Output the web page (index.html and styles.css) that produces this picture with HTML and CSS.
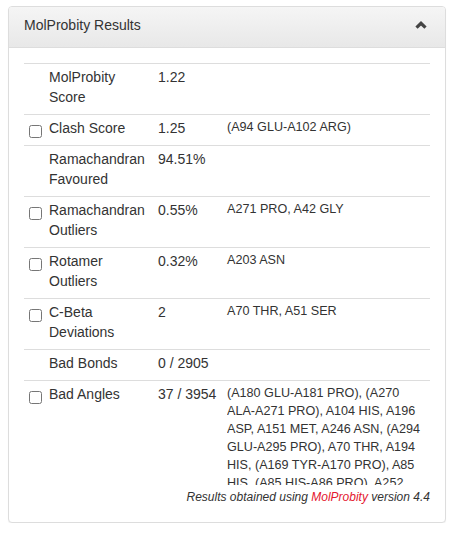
FILE: index.html
```html
<!DOCTYPE html>
<html>
<head>
<meta charset="utf-8">
<link rel="stylesheet" href="styles.css">
</head>
<body>
<div class="panel">
  <div class="panel-heading">
    <h3 class="panel-title">MolProbity Results</h3>
    <svg class="chevron" width="12" height="8" viewBox="0 0 12 8"><polyline points="1.5,6.7 6,2.3 10.5,6.7" fill="none" stroke="#444" stroke-width="3.2"/></svg>
  </div>
  <div class="panel-body">
    <table class="results">
      <colgroup><col class="c1"><col class="c2"><col class="c3"><col class="c4"></colgroup>
      <tbody>
        <tr><td></td><td>MolProbity Score</td><td class="val">1.22</td><td></td></tr>
        <tr><td><input type="checkbox" class="cb"></td><td>Clash Score</td><td class="val">1.25</td><td class="det">(A94 GLU-A102 ARG)</td></tr>
        <tr><td></td><td>Ramachandran Favoured</td><td class="val">94.51%</td><td></td></tr>
        <tr><td><input type="checkbox" class="cb"></td><td>Ramachandran Outliers</td><td class="val">0.55%</td><td class="det">A271 PRO, A42 GLY</td></tr>
        <tr><td><input type="checkbox" class="cb"></td><td>Rotamer Outliers</td><td class="val">0.32%</td><td class="det">A203 ASN</td></tr>
        <tr><td><input type="checkbox" class="cb"></td><td>C-Beta Deviations</td><td class="val">2</td><td class="det">A70 THR, A51 SER</td></tr>
        <tr><td></td><td>Bad Bonds</td><td class="val">0 / 2905</td><td></td></tr>
        <tr class="last"><td><input type="checkbox" class="cb"></td><td>Bad Angles</td><td class="val">37 / 3954</td><td class="det"><div class="scroll">(A180 GLU-A181 PRO), (A270 ALA-A271 PRO), A104 HIS, A196 ASP, A151 MET, A246 ASN, (A294 GLU-A295 PRO), A70 THR, A194 HIS, (A169 TYR-A170 PRO), A85 HIS, (A85 HIS-A86 PRO), A252 GLU, A271 PRO, (A42 GLY-A43 PRO), A203 ASN, A51 SER</div></td></tr>
      </tbody>
    </table>
    <p class="credit">Results obtained using <a class="link">MolProbity</a> version 4.4</p>
  </div>
</div>
</body>
</html>
```
FILE: styles.css
```css
html, body {
  margin: 0;
  padding: 0;
  background: #fff;
}
body {
  font-family: "Liberation Sans", Arial, sans-serif;
  font-size: 14px;
  line-height: 20px;
  color: #333;
}
.panel {
  box-sizing: border-box;
  width: 438px;
  margin: 6px 0 0 8px;
  border: 1px solid #ddd;
  border-radius: 4px;
  box-shadow: 0 1px 1px rgba(0,0,0,0.05);
  background: #fff;
}
.panel-heading {
  display: flex;
  justify-content: space-between;
  align-items: center;
  padding: 8px 15px 12px;
  background: linear-gradient(to bottom, #f5f5f5 0%, #e8e8e8 100%);
  border-bottom: 1px solid #ddd;
  border-radius: 3px 3px 0 0;
}
.panel-title {
  margin: 0;
  font-size: 14px;
  font-weight: normal;
  line-height: 20px;
  color: #333;
}
.chevron {
  display: block;
  margin: 0 3px 0 0;
}
.panel-body {
  padding: 15px 15px 16px;
}
.results {
  width: 100%;
  table-layout: fixed;
  border-collapse: collapse;
  border-spacing: 0;
}
.c1 { width: 20px; }
.c2 { width: 109px; }
.c3 { width: 69px; }
.c4 { width: auto; }
.results td {
  padding: 3px 5px 7px;
  vertical-align: top;
  border-top: 1px solid #ddd;
}
.results .last td {
  padding-bottom: 3px;
}
.val { white-space: nowrap; }
.det {
  font-size: 12.6px;
  line-height: 18px;
}
.scroll {
  max-height: 101px;
  overflow: hidden;
}
.cb {
  display: block;
  width: 13px;
  height: 13px;
  margin: 7px 0 0 0;
}
.credit {
  margin: 0;
  text-align: right;
  font-style: italic;
  font-size: 12px;
  line-height: 18px;
}
.link {
  color: #e4172f;
  text-decoration: none;
}
```
